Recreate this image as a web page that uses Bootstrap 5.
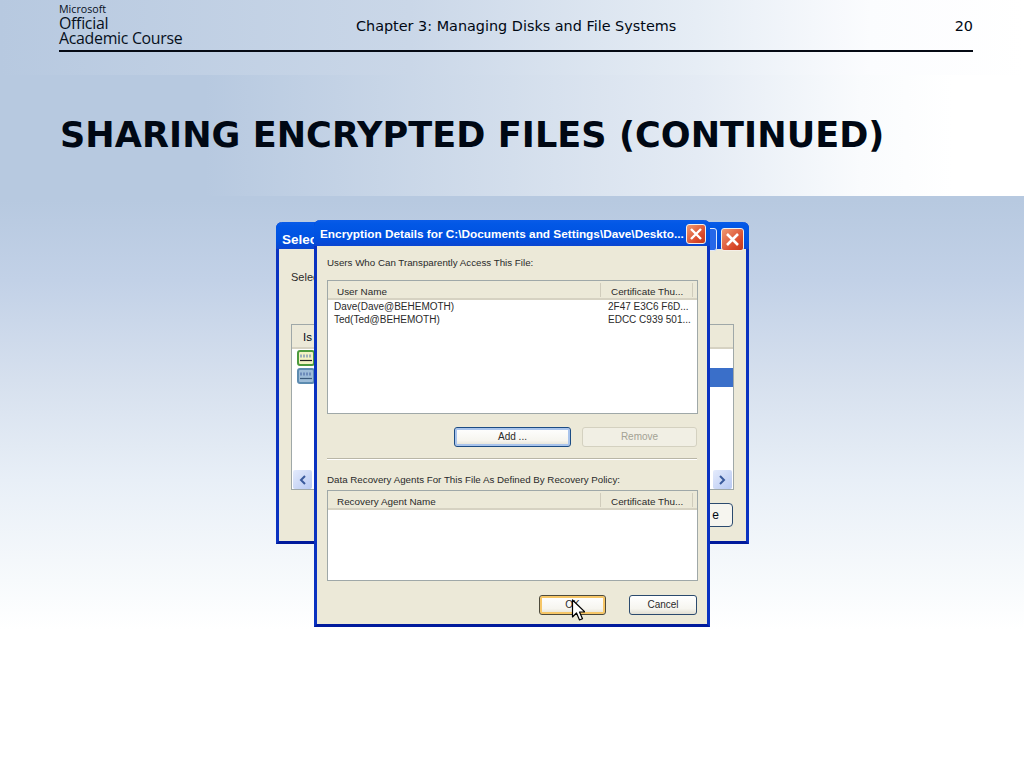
<!DOCTYPE html>
<html lang="en">
<head>
<meta charset="utf-8">
<title>Sharing Encrypted Files (Continued)</title>
<link href="https://cdn.jsdelivr.net/npm/bootstrap@5.3.0/dist/css/bootstrap.min.css" rel="stylesheet">
<style>
html,body{margin:0;height:768px;overflow:hidden}
body{width:1024px;color:#000814;font-family:"DejaVu Sans",sans-serif;background:linear-gradient(180deg,#b7c9e0 0,#b7c9e0 200px,#c2d1e7 280px,#d6e0ee 380px,#e8eff7 480px,#f7fafc 580px,#fff 630px,#fff 768px)}
.slide-top{height:75px;padding:0 51px 0 59px;background:linear-gradient(90deg,#b7c9e0 0,#cad7e8 40%,#e6edf5 68%,#fbfcfe 85%,#fff 100%)}
.slide-top-inner{height:52px;border-bottom:2px solid #050a14}
.ms-logo{width:220px;font-family:"Open Sans",sans-serif;font-weight:500;color:#07101c;line-height:15px;font-size:15.9px;letter-spacing:-.3px;padding-top:3px}
.ms-logo small{display:block;font-size:10.7px;line-height:13px;letter-spacing:0;font-weight:500}
.chap{width:320px;margin-left:77px;font-size:14.4px;line-height:1;padding-top:19px;white-space:nowrap}
.pnum{font-size:14.4px;line-height:1;padding-top:19px}
.slide-title{height:121px;padding:41px 0 0 60px;background:linear-gradient(90deg,#b7c9e0 0,#b7c9e0 20%,#d3deec 50%,#e4ebf4 68%,#f9fbfd 84%,#fff 93%)}
.slide-title h1{font:700 35.1px/1.1 "DejaVu Sans",sans-serif;letter-spacing:.06px;margin:0;color:#000814;white-space:nowrap}
.xp{position:absolute;background:#ece9d8;border:3px solid #0a32c0;border-bottom-color:#001a9c;border-top:0;border-radius:6px 6px 0 0;font-family:"Liberation Sans",sans-serif}
.xp-back{left:276px;top:222px;width:473px;height:322px}
.xp-front{left:314px;top:220px;width:396px;height:407px}
.xp-bar{margin:0 -3px;height:26px;padding:0 4px 0 6px;color:#fff;font:700 11.8px/29px "Liberation Sans",sans-serif;white-space:nowrap;border-radius:6px 6px 0 0;background:linear-gradient(180deg,#0a5be8 0,#0258e6 15%,#0050e0 70%,#0a45d0 100%)}
.xp-back .xp-bar{height:27px;font-size:13.5px;line-height:36px;padding-right:5px}
.xp-ctl{padding-top:6px}
.xp-x{width:20px;height:20px;border:1px solid #f4efe8;border-radius:3px;background:linear-gradient(135deg,#ef9a72,#d9482a 70%,#c23a1c)}
.xp-back .xp-x{width:23px;height:23px}
.xp-blank{width:23px;height:23px;border:1px solid #dfe8fb;border-radius:3px;background:#2667e8}
.xp-client{font-size:9.75px;line-height:12px;color:#2a2a2a;padding:11px 9px 0 10px}
.xp-list{border:1px solid #9fa8a8;background:#fff}
.xp-head{height:19px;background:#ece9d8;border-bottom:2px solid #d6d2c2;font-size:9.9px}
.colname{padding-left:9px;width:273px;border-right:1px solid #d0ccbc;margin-top:2px;height:14px;line-height:17px}
.colthumb{padding-left:10px;width:92px;border-right:1px solid #d0ccbc;margin-top:2px;height:14px;line-height:17px}
.rowline{height:13px;line-height:13px;padding-left:6px;white-space:nowrap;font-size:10px}
.rowline span:first-child{display:inline-block;width:274px}
.xpbtn{height:20px;padding:0;font-size:10px;line-height:18px;color:#2a2a2a;border:1px solid #2b4a6e;border-radius:3px;background:linear-gradient(180deg,#fff 0,#f6f5ef 70%,#e2dfd2 100%)}
.xpbtn-def{box-shadow:inset 0 0 0 2px #a9c4ec;border-color:#1c4c84}
.xpbtn-hot{box-shadow:inset 0 0 0 2px #f6c667;border-color:#4d4a3c}
.xpbtn:disabled{opacity:1;color:#a3a294;border-color:#d4d1c0;background:#f1efe4}
.rule{border-top:1px solid #b9b6a6;box-shadow:0 1px 0 #fff;margin:11px 1px 0 0}
.backtext{font-size:11px;line-height:16px;color:#2a2a2a}
.backlist{position:absolute;left:12px;top:102px;width:443px;height:166px;border:1px solid #9fa8a8;background:#fff}
.backhead{height:24px;background:#ece9d8;border-bottom:2px solid #d6d2c2;padding:4px 0 0 11px;font-size:11.5px}
.cert{position:absolute;left:5px}
.sel{position:absolute;right:0;top:43px;width:30px;height:19px;background:#3a6fc9}
.sbtn{position:absolute;bottom:0;width:19px;height:19px;border-radius:2px;background:linear-gradient(135deg,#e4ebfc,#b8c9f2)}
.backbtn{position:absolute;left:400px;top:281px;width:54px;height:24px;border:1px solid #2b4a6e;border-radius:4px;background:#f6f5ef;font-size:12px;line-height:22px;text-align:right;padding-right:13px}
.pointer{position:absolute;left:571px;top:599px}
</style>
</head>
<body class="position-relative">
<header class="slide-top">
  <div class="slide-top-inner d-flex">
    <div class="ms-logo"><small>Microsoft</small>Official<br>Academic Course</div>
    <div class="chap">Chapter 3: Managing Disks and File Systems</div>
    <div class="pnum ms-auto">20</div>
  </div>
</header>
<div class="slide-title"><h1>SHARING ENCRYPTED FILES (CONTINUED)</h1></div>

<section class="xp xp-back">
  <div class="xp-bar d-flex justify-content-between">
    <span>Selec</span>
    <span class="d-flex gap-1 xp-ctl align-items-start"><span class="xp-blank"></span><span class="xp-x d-block"><svg class="d-block" width="21" height="21" viewBox="0 0 21 21"><path d="M5 5l11 11M16 5L5 16" stroke="#fff" stroke-width="2.6"/></svg></span></span>
  </div>
  <div class="backtext px-2 ms-1 pt-3 mt-1">Selec</div>
  <div class="backlist">
    <div class="backhead">Is</div>
    <svg class="cert" style="top:25px" width="18" height="16" viewBox="0 0 18 16"><rect x="1" y="1" width="16" height="14" rx="2" fill="#f4f2c4" stroke="#4c9a3c" stroke-width="2"/><path d="M4 4.500v3M7 4.500v3M10 4.500v3M13 4.500v3" stroke="#4a6fb0"/><path d="M3 10.500h12" stroke="#222" stroke-width="1.200"/></svg>
    <svg class="cert" style="top:43px" width="18" height="16" viewBox="0 0 18 16"><rect x="1" y="1" width="16" height="14" rx="2" fill="#9dbcd8" stroke="#5c8bb0" stroke-width="2"/><path d="M4 4.500v3M7 4.500v3M10 4.500v3M13 4.500v3" stroke="#3a5a9c"/><path d="M3 10.500h12" stroke="#3a5a7c" stroke-width="1.200"/></svg>
    <div class="sel"></div>
    <div class="sbtn d-flex align-items-center justify-content-center" style="left:1px"><svg width="9" height="10" viewBox="0 0 9 10"><path d="M7 1L3 5l4 4" fill="none" stroke="#3a5a9c" stroke-width="2"/></svg></div>
    <div class="sbtn d-flex align-items-center justify-content-center" style="right:1px"><svg width="9" height="10" viewBox="0 0 9 10"><path d="M2 1l4 4-4 4" fill="none" stroke="#3a5a9c" stroke-width="2"/></svg></div>
  </div>
  <div class="backbtn">e</div>
</section>

<section class="xp xp-front">
  <div class="xp-bar d-flex justify-content-between">
    <span>Encryption Details for C:\Documents and Settings\Dave\Deskto...</span>
    <span class="xp-x d-block mt-1 flex-shrink-0"><svg class="d-block" width="18" height="18" viewBox="0 0 18 18"><path d="M4 4l10 10M14 4L4 14" stroke="#fff" stroke-width="2.400"/></svg></span>
  </div>
  <div class="xp-client">
    <div>Users Who Can Transparently Access This File:</div>
    <div class="xp-list" style="height:134px;width:371px;margin-top:11px">
      <div class="xp-head d-flex"><div class="colname">User Name</div><div class="colthumb">Certificate Thu...</div></div>
      <div class="rowline"><span>Dave(Dave@BEHEMOTH)</span><span>2F47 E3C6 F6D...</span></div>
      <div class="rowline"><span>Ted(Ted@BEHEMOTH)</span><span>EDCC C939 501...</span></div>
    </div>
    <div class="d-flex justify-content-end" style="margin:13px 1px 0 0;gap:11px">
      <button type="button" class="btn xpbtn xpbtn-def" style="width:117px">Add ...</button>
      <button type="button" class="btn xpbtn" style="width:115px" disabled>Remove</button>
    </div>
    <div class="rule"></div>
    <div style="margin-top:15px">Data Recovery Agents For This File As Defined By Recovery Policy:</div>
    <div class="xp-list" style="height:91px;width:371px;margin-top:4px">
      <div class="xp-head d-flex"><div class="colname">Recovery Agent Name</div><div class="colthumb">Certificate Thu...</div></div>
    </div>
    <div class="d-flex justify-content-end" style="margin:14px 1px 0 0;gap:23px">
      <button type="button" class="btn xpbtn xpbtn-hot" style="width:67px">OK</button>
      <button type="button" class="btn xpbtn" style="width:68px">Cancel</button>
    </div>
  </div>
</section>
<svg class="pointer" width="14" height="24" viewBox="0 0 14 24"><path d="M1.500 1v17l4-4 3 7 3-1.300-3-6.700h5.500z" fill="#fff" stroke="#000" stroke-width="1.200" stroke-linejoin="round"/></svg>
<script src="https://cdn.jsdelivr.net/npm/bootstrap@5.3.0/dist/js/bootstrap.bundle.min.js"></script>
</body>
</html>
